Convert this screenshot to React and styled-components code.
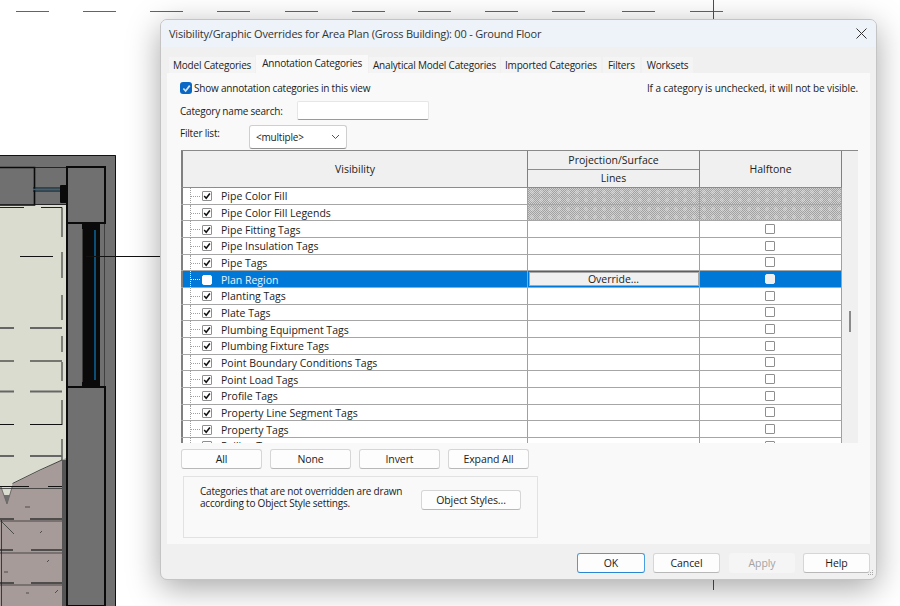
import styled, { createGlobalStyle } from 'styled-components';

const GlobalStyle = createGlobalStyle`
  html, body {
    margin: 0;
    padding: 0;
    background: #fff;
    overflow: hidden;
  }
`;

const ROW_HEIGHT = 16.67;

const rows = [
  { name: 'Pipe Color Fill', checked: true, hatched: true },
  { name: 'Pipe Color Fill Legends', checked: true, hatched: true },
  { name: 'Pipe Fitting Tags', checked: true },
  { name: 'Pipe Insulation Tags', checked: true },
  { name: 'Pipe Tags', checked: true },
  { name: 'Plan Region', checked: false, selected: true },
  { name: 'Planting Tags', checked: true },
  { name: 'Plate Tags', checked: true },
  { name: 'Plumbing Equipment Tags', checked: true },
  { name: 'Plumbing Fixture Tags', checked: true },
  { name: 'Point Boundary Conditions Tags', checked: true },
  { name: 'Point Load Tags', checked: true },
  { name: 'Profile Tags', checked: true },
  { name: 'Property Line Segment Tags', checked: true },
  { name: 'Property Tags', checked: true },
  { name: 'Railing Tags', checked: true },
];

const tabs = [
  'Model Categories',
  'Annotation Categories',
  'Analytical Model Categories',
  'Imported Categories',
  'Filters',
  'Worksets',
];

const Desktop = styled.div`
  position: relative;
  width: 900px;
  height: 606px;
  overflow: hidden;
  background: #fff;
  font-family: "Open Sans", "Noto Sans", sans-serif;
  font-size: 10px;
  letter-spacing: -0.2px;
  color: #1b1b1b;
`;

const Canvas = styled.svg`
  position: absolute;
  inset: 0;
`;

const Dialog = styled.div`
  position: absolute;
  left: 160px;
  top: 19px;
  width: 717px;
  height: 561px;
  box-sizing: border-box;
  display: flex;
  flex-direction: column;
  background: #f0f0f0;
  border: 1px solid #c4c4c4;
  border-radius: 7px;
  box-shadow: 0 8px 32px rgba(0, 0, 0, 0.35);
  overflow: hidden;
`;

const TitleBar = styled.div`
  height: 27px;
  flex: none;
  display: flex;
  align-items: center;
  justify-content: space-between;
  padding: 0 9px 0 8px;
  background: #eef3fa;
  font-size: 11px;
  color: #333;
`;

const TabStrip = styled.div`
  display: flex;
  align-items: flex-end;
  gap: 1px;
  height: 26px;
  flex: none;
  padding-left: 8px;
`;

const Tab = styled.div`
  height: ${p => (p.$active ? 18 : 16)}px;
  line-height: 16px;
  padding: 0 ${p => (p.$active ? 6 : 4)}px;
  background: ${p => (p.$active ? '#f9f9f9' : '#f4f4f4')};
  white-space: nowrap;
  color: #222;

  &:nth-child(n + 5) {
    padding: 0 5px;
    margin-left: 1px;
  }
`;

const Panel = styled.div`
  flex: none;
  width: 703px;
  height: 471px;
  margin-left: 6px;
  box-sizing: border-box;
  padding: 0 12px 0 13px;
  display: flex;
  flex-direction: column;
  background: #f9f9f9;
`;

const TopRow = styled.div`
  display: flex;
  justify-content: space-between;
  align-items: center;
  height: 18px;
  margin-top: 6px;
`;

const CheckLabel = styled.label`
  display: flex;
  align-items: center;
  gap: 2px;
`;

const BlueCheck = styled.span`
  width: 12px;
  height: 12px;
  border-radius: 3px;
  background: #0a67c4;
  display: flex;
  align-items: center;
  justify-content: center;
`;

const Hint = styled.span`
  letter-spacing: -0.1px;
`;

const SearchRow = styled.div`
  display: flex;
  align-items: center;
  height: 19px;
  margin-top: 4px;
`;

const FieldLabel = styled.span`
  width: 117px;
  flex: none;
`;

const SearchInput = styled.div`
  width: 132px;
  height: 19px;
  box-sizing: border-box;
  background: #fff;
  border: 1px solid #e6e6e6;
  border-bottom-color: #9a9a9a;
  border-radius: 2px;
`;

const FilterRow = styled.div`
  display: flex;
  align-items: flex-start;
  height: 24px;
  margin-top: 5px;
`;

const FilterLabel = styled.span`
  width: 69px;
  flex: none;
  line-height: 16px;
`;

const Select = styled.div`
  width: 98px;
  height: 24px;
  box-sizing: border-box;
  display: flex;
  align-items: center;
  justify-content: space-between;
  padding: 0 6px;
  background: #fff;
  border: 1px solid #cfcfcf;
  border-bottom-color: #8f8f8f;
  border-radius: 3px;
`;

const Grid = styled.div`
  flex: none;
  width: 677px;
  height: 293px;
  margin: 1px 0 0 1px;
  display: flex;
  overflow: hidden;
  background: #f0f0f0;
  border-top: 1px solid #8a8a8a;
  box-sizing: border-box;
  font-size: 10.5px;
  letter-spacing: 0;
`;

const GridBody = styled.div`
  width: 661px;
  flex: none;
  overflow: hidden;
`;

const HeadRow = styled.div`
  display: grid;
  grid-template-columns: 347px 172px 142px;
  height: 37px;
  border-bottom: 1px solid #8c8c8c;
  box-sizing: border-box;
`;

const HeadCell = styled.div`
  display: flex;
  align-items: center;
  justify-content: center;
  height: 100%;
  background: #f0f0f0;
  border-left: ${p => (p.$first ? '2px solid #808080' : 'none')};
  border-right: 1px solid #808080;
  box-sizing: border-box;
  color: #222;
`;

const HeadStack = styled.div`
  display: flex;
  flex-direction: column;
  height: 100%;
  border-right: 1px solid #808080;
  box-sizing: border-box;
`;

const HeadLine = styled.div`
  flex: 1;
  display: flex;
  align-items: center;
  justify-content: center;
  background: #f0f0f0;
  border-bottom: ${p => (p.$divided ? '1px solid #8c8c8c' : 'none')};
  color: #222;
`;

const Row = styled.div`
  display: grid;
  grid-template-columns: 347px 172px 142px;
  box-sizing: border-box;
  height: ${ROW_HEIGHT}px;
  background: ${p => (p.$selected ? '#0078d7' : '#fff')};
  border-bottom: 1px solid #a6a6a6;
`;

const NameCell = styled.div`
  position: relative;
  display: flex;
  align-items: center;
  padding: 1px 0 0 19px;
  box-sizing: border-box;
  border-left: 2px solid #808080;
  border-right: 1px solid #a0a0a0;
  color: ${p => (p.$selected ? '#e8f2fb' : '#222')};
  white-space: nowrap;
`;

const TreeLine = styled.span`
  position: absolute;
  left: 7px;
  top: 0;
  bottom: -1px;
  width: 8px;
  border-left: 1px dotted ${p => (p.$selected ? '#dfeefa' : '#a0a0a0')};
  &::after {
    content: '';
    position: absolute;
    left: 0;
    top: 8px;
    width: 9px;
    border-top: 1px dotted ${p => (p.$selected ? '#ffffff' : '#a0a0a0')};
  }
`;

const Box = styled.span`
  width: 10px;
  height: 10px;
  flex: none;
  box-sizing: border-box;
  display: flex;
  align-items: center;
  justify-content: center;
  margin-right: ${p => (p.$halftone ? 1 : 9)}px;
  background: ${p => (p.$halftone && p.$selected ? '#f0f0f0' : '#fff')};
  border: 1px solid ${p => (p.$selected ? (p.$halftone ? '#f0f0f0' : '#fff') : '#8e8e8e')};
  border-radius: ${p => (p.$selected ? 2 : 1)}px;
`;

const ValueCell = styled.div`
  box-sizing: border-box;
  display: flex;
  align-items: center;
  justify-content: center;
  border-right: 1px solid #a0a0a0;
  ${p =>
    p.$hatched &&
    `
    background-color: #bcbcbc;
    background-image:
      radial-gradient(circle at 4px 4px, rgba(235, 235, 235, 0.3) 1.6px, transparent 2.2px),
      repeating-conic-gradient(#a2a2a2 0 25%, #d0d0d0 0 50%);
    background-size: 9px 8px, 2px 2px;
  `}
`;

const OverrideButton = styled.div`
  width: 170px;
  height: 14px;
  box-sizing: border-box;
  display: flex;
  align-items: center;
  justify-content: center;
  background: #f0f0f0;
  border: 1px solid #a8a8a8;
  color: #222;
`;

const ScrollTrack = styled.div`
  position: relative;
  flex: 1;
  background: #f0f0f0;
`;

const ScrollThumb = styled.div`
  position: absolute;
  left: 7px;
  top: 160px;
  width: 2px;
  height: 21px;
  background: #8a8a8a;
`;

const ButtonRow = styled.div`
  display: flex;
  gap: 8px;
  margin: 6px 0 0 1px;
`;

const Button = styled.div`
  width: ${p => p.$w || 81}px;
  height: 20px;
  flex: none;
  box-sizing: border-box;
  display: flex;
  align-items: center;
  justify-content: center;
  margin-left: ${p => (p.$disabled ? 1 : 0)}px;
  background: ${p => (p.$disabled ? '#f5f5f5' : '#fdfdfd')};
  border: 1px solid ${p => (p.$primary ? '#4a9ee0' : p.$disabled ? '#f5f5f5' : '#d6d6d6')};
  border-bottom-color: ${p => (p.$primary ? '#2b86d2' : p.$disabled ? '#f5f5f5' : '#b8b8b8')};
  border-radius: 3px;
  color: ${p => (p.$disabled ? '#a3a3a3' : '#1b1b1b')};
  font-size: 10.5px;
  letter-spacing: -0.1px;
`;

const NoteBox = styled.div`
  width: 355px;
  height: 62px;
  margin: 7px 0 0 3px;
  padding: 8px 16px 0 16px;
  box-sizing: border-box;
  display: flex;
  justify-content: space-between;
  align-items: flex-start;
  border: 1px solid #e2e2e2;
  line-height: 12px;
`;

const NoteText = styled.div`
  white-space: nowrap;
`;

const NoteAction = styled.div`
  margin-top: 5px;
`;

const Footer = styled.div`
  flex: 1;
  display: flex;
  justify-content: flex-end;
  align-items: center;
  gap: 8px;
  padding: 2px 6px 0 0;
`;

const Grip = styled.svg`
  position: absolute;
  right: 2px;
  bottom: 2px;
`;

function Tick({ color = '#111', size = 10 }) {
  return (
    <svg width={size} height={size} viewBox="0 0 10 10">
      <path d="M1.5 5 L4 7.8 L8.6 1.8" fill="none" stroke={color} strokeWidth="1.9" />
    </svg>
  );
}

function Drawing() {
  return (
    <Canvas width="900" height="606" viewBox="0 0 900 606">
      {[16, 83, 150, 217, 285, 352, 418, 485, 552, 622, 690].map(x => (
        <rect key={x} x={x} y="11" width="33" height="1" fill="#2f8a2f" />
      ))}
      <rect x="713" y="0" width="1" height="22" fill="#1f6f1f" />
      <rect x="713" y="578" width="1" height="12" fill="#1f6f1f" />

      {/* outer wall */}
      <rect x="0" y="155" width="116" height="451" fill="#707070" />
      <path d="M0 155.5H115.5V606" fill="none" stroke="#111" strokeWidth="1" />
      {/* room fill */}
      <rect x="0" y="205" width="66.5" height="290" fill="#d9dccf" />
      <path d="M0 487 L1 487 L7 504 L12.5 484 L62 460 L66 458 V606 H0 Z" fill="#a69b98" />
      <path d="M1 487 L7 504 L12.5 486" fill="none" stroke="#666" strokeWidth="0.9" />
      <path d="M12.5 483.5 L40 470 L62 460" fill="none" stroke="#222" strokeWidth="0.8" />
      {/* columns */}
      <rect x="62" y="460" width="5" height="146" fill="#555" />
      <path d="M0 167.5H34.5V205H0" fill="#707070" stroke="#0a0a0a" strokeWidth="1.6" />
      <path d="M34 167.5H66M34 204.5H66" stroke="#111" strokeWidth="0.8" />
      <path d="M33 188H61M33 191H61" stroke="#111" strokeWidth="1" />
      <path d="M33 189.5H61" stroke="#0f6fa8" strokeWidth="1.4" />
      <rect x="60" y="185" width="7" height="18" rx="1" fill="#0a0a0a" />
      <rect x="67" y="167" width="38" height="56" fill="#707070" stroke="#0a0a0a" strokeWidth="2" />
      <path d="M82.5 224V384M104.5 224V386" stroke="#333" strokeWidth="0.8" />
      <rect x="82" y="224" width="18" height="5" fill="#0a0a0a" />
      <rect x="83" y="228" width="17" height="158" fill="#0a0a0a" />
      <rect x="94" y="230" width="2" height="150" fill="#0b4f78" />
      <rect x="82" y="382" width="18" height="5" fill="#0a0a0a" />
      <path d="M67 223V606" stroke="#0a0a0a" strokeWidth="2" />
      <rect x="67" y="387" width="38" height="219" fill="#707070" stroke="#0a0a0a" strokeWidth="2" />

      {/* dashed inner lines */}
      <path d="M0 207.5H24M41 207.5H62V237M62 252V278M62 295V320M62 336V352M62 362V381M62 400V425M62 439V460" fill="none" stroke="#222" strokeWidth="1" />
      {[[328, true], [361, false], [391.5, true], [424.5, false], [456, true]].map(([y, dbl]) => (
        <path key={y} d={`M0 ${y}H14M30 ${y}H62`} stroke={dbl ? '#666' : '#111'} strokeWidth={dbl ? 2.2 : 1} />
      ))}
      <path d="M0 486.5H29M48 486.5H62" stroke="#111" strokeWidth="1" />
      <path d="M0 488.5H62M0 521H62M0 553H62M0 585H62" stroke="#333" strokeWidth="0.8" />
      <path d="M0 519H14M30 519H62M0 550H13M31 550H62M0 583H14M31 583H62" stroke="#333" strokeWidth="1.4" />
      <path d="M1.5 520V606" stroke="#222" strokeWidth="0.8" />
      <path d="M2 522L14 534M25 507H30M40 533L42 531M47 562L49 560M4 572H8M26 593H29M55 593L58 590" stroke="#444" strokeWidth="0.9" />

      {/* leader line */}
      <path d="M20 256.5H53M86 256.5H160" stroke="#111" strokeWidth="1" />
    </Canvas>
  );
}

export default function App() {
  return (
    <>
      <GlobalStyle />
      <Desktop>
        <Drawing />
        <Dialog>
          <TitleBar>
            <span>Visibility/Graphic Overrides for Area Plan (Gross Building): 00 - Ground Floor</span>
            <svg width="11" height="11" viewBox="0 0 11 11">
              <path d="M0.5 0.5L10.5 10.5M10.5 0.5L0.5 10.5" stroke="#333" strokeWidth="1" />
            </svg>
          </TitleBar>
          <TabStrip>
            {tabs.map(t => (
              <Tab key={t} $active={t === 'Annotation Categories'}>{t}</Tab>
            ))}
          </TabStrip>
          <Panel>
            <TopRow>
              <CheckLabel>
                <BlueCheck><Tick color="#cfe5fa" size={9} /></BlueCheck>
                Show annotation categories in this view
              </CheckLabel>
              <Hint>If a category is unchecked, it will not be visible.</Hint>
            </TopRow>
            <SearchRow>
              <FieldLabel>Category name search:</FieldLabel>
              <SearchInput />
            </SearchRow>
            <FilterRow>
              <FilterLabel>Filter list:</FilterLabel>
              <Select>
                &lt;multiple&gt;
                <svg width="9" height="6" viewBox="0 0 9 6">
                  <path d="M1 1L4.5 4.5L8 1" fill="none" stroke="#555" strokeWidth="1" />
                </svg>
              </Select>
            </FilterRow>
            <Grid>
              <GridBody>
                <HeadRow>
                  <HeadCell $first>Visibility</HeadCell>
                  <HeadStack>
                    <HeadLine $divided>Projection/Surface</HeadLine>
                    <HeadLine>Lines</HeadLine>
                  </HeadStack>
                  <HeadCell>Halftone</HeadCell>
                </HeadRow>
                {rows.map(r => (
                  <Row key={r.name} $selected={r.selected}>
                    <NameCell $selected={r.selected}>
                      <TreeLine $selected={r.selected} />
                      <Box $selected={r.selected}>{r.checked && <Tick />}</Box>
                      {r.name}
                    </NameCell>
                    <ValueCell $hatched={r.hatched}>
                      {r.selected && <OverrideButton>Override...</OverrideButton>}
                    </ValueCell>
                    <ValueCell $hatched={r.hatched}>
                      {!r.hatched && <Box $halftone $selected={r.selected} />}
                    </ValueCell>
                  </Row>
                ))}
              </GridBody>
              <ScrollTrack><ScrollThumb /></ScrollTrack>
            </Grid>
            <ButtonRow>
              <Button>All</Button>
              <Button>None</Button>
              <Button>Invert</Button>
              <Button>Expand All</Button>
            </ButtonRow>
            <NoteBox>
              <NoteText>
                Categories that are not overridden are drawn
                <br />
                according to Object Style settings.
              </NoteText>
              <NoteAction><Button $w={100}>Object Styles...</Button></NoteAction>
            </NoteBox>
          </Panel>
          <Footer>
            <Button $w={68} $primary>OK</Button>
            <Button $w={67}>Cancel</Button>
            <Button $w={66} $disabled>Apply</Button>
            <Button $w={67}>Help</Button>
          </Footer>
          <Grip width="8" height="8" viewBox="0 0 8 8">
            <path d="M6 1h1v1H6zM4 3h1v1H4zM6 3h1v1H6zM2 5h1v1H2zM4 5h1v1H4zM6 5h1v1H6z" fill="#a8a8a8" />
          </Grip>
        </Dialog>
      </Desktop>
    </>
  );
}
